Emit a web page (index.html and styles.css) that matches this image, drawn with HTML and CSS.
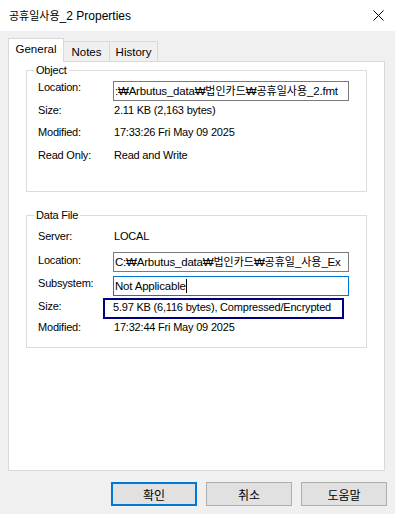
FILE: index.html
```html
<!DOCTYPE html>
<html lang="ko">
<head>
<meta charset="utf-8">
<title>공휴일사용_2 Properties</title>
<link rel="stylesheet" href="styles.css">
</head>
<body>
<div class="window">
  <div class="titlebar">
    <span class="title"><span class="ko">공휴일사용</span>_2 Properties</span>
    <svg class="close" width="11" height="11" viewBox="0 0 11 11"><path d="M0.5 0.5 L10.5 10.5 M10.5 0.5 L0.5 10.5" stroke="#000" stroke-width="1" fill="none"/></svg>
  </div>
  <div class="content">
    <div class="tabs">
      <div class="tab tab-general active">General</div>
      <div class="tab tab-notes">Notes</div>
      <div class="tab tab-history">History</div>
    </div>
    <div class="panel">
      <div class="group group-object">
        <div class="group-title">Object</div>
        <div class="rows rows-object">
          <div class="label lbl-first">Location:</div>
          <div class="textbox tb-obj">:₩Arbutus_data₩<span class="ko">법인카드</span>₩<span class="ko">공휴일사용</span>_2.fmt</div>
          <div class="label">Size:</div>
          <div class="value">2.11 KB (2,163 bytes)</div>
          <div class="label">Modified:</div>
          <div class="value">17:33:26 Fri May 09 2025</div>
          <div class="label">Read Only:</div>
          <div class="value">Read and Write</div>
        </div>
      </div>
      <div class="group group-data">
        <div class="group-title">Data File</div>
        <div class="rows rows-data">
          <div class="label">Server:</div>
          <div class="value">LOCAL</div>
          <div class="label">Location:</div>
          <div class="textbox tb-data">C:₩Arbutus_data₩<span class="ko">법인카드</span>₩<span class="ko">공휴일</span>_<span class="ko">사용</span>_Ex</div>
          <div class="label">Subsystem:</div>
          <div class="textbox tb-sub focused">Not Applicable<span class="caret"></span></div>
          <div class="label">Size:</div>
          <div class="value"><span class="highlight">5.97 KB (6,116 bytes), Compressed/Encrypted</span></div>
          <div class="label">Modified:</div>
          <div class="value">17:32:44 Fri May 09 2025</div>
        </div>
      </div>
    </div>
    <div class="buttons">
      <button class="btn default"><span class="ko">확인</span></button>
      <button class="btn"><span class="ko">취소</span></button>
      <button class="btn"><span class="ko">도움말</span></button>
    </div>
  </div>
</div>
</body>
</html>
```

FILE: styles.css
```css
* { box-sizing: border-box; }
html, body { margin: 0; padding: 0; }
body {
  width: 395px;
  height: 514px;
  background: #f0f0f0;
  font-family: "Liberation Sans", "Noto Sans CJK KR", sans-serif;
  font-size: 11px;
  letter-spacing: -0.2px;
  line-height: 15px;
  color: #000;
  overflow: hidden;
}
.ko {
  font-family: "Noto Sans CJK KR", sans-serif;
  font-size: 11px;
  letter-spacing: 0;
}
.window { width: 395px; height: 514px; }
.titlebar {
  height: 31px;
  background: #fff;
  display: flex;
  align-items: center;
  justify-content: space-between;
  padding: 0 11px 0 9px;
}
.title { font-size: 12px; letter-spacing: 0; }
.close { display: block; }

.content { padding: 7px 8px 0 8px; }

.tabs {
  display: flex;
  align-items: flex-end;
  height: 23px;
}
.tab {
  height: 20px;
  border: 1px solid #d9d9d9;
  border-bottom: none;
  background: #f0f0f0;
  text-align: center;
  line-height: 20px;
  font-size: 11.5px;
  letter-spacing: 0;
  position: relative;
}
.tab-general { width: 56px; }
.tab-notes { width: 47px; margin-left: -1px; }
.tab-history { width: 49px; margin-left: -1px; }
.tab.active {
  height: 24px;
  margin-bottom: -1px;
  background: #fff;
  z-index: 1;
  line-height: 21px;
}

.panel {
  width: 377px;
  height: 410px;
  background: #fff;
  border: 1px solid #d9d9d9;
  padding: 8px 0 0 17px;
}

.group {
  width: 341px;
  border: 1px solid #dcdcdc;
  display: flex;
  flex-direction: column;
}
.group-object { height: 122px; }
.group-data { height: 133px; margin-top: 23px; }
.group-title {
  align-self: flex-start;
  margin: -8px 0 0 7px;
  padding: 0 2px;
  background: #fff;
}

.rows {
  display: grid;
  grid-template-columns: 75px 236px;
  padding-left: 11px;
}
.rows-object {
  margin-top: 2px;
  grid-template-rows: 23px 22px 23px 15px;
}
.rows-data {
  margin-top: 6px;
  grid-template-rows: 24px 23px 23px 21px 15px;
}
.label { white-space: nowrap; }
.value { padding-left: 1px; white-space: nowrap; }

.textbox {
  height: 20px;
  border: 1px solid #7a7a7a;
  padding: 1px 0 0 1px;
  white-space: nowrap;
  overflow: hidden;
  margin-top: 1px;
  font-size: 11.5px;
}
.tb-data { margin-top: -1px; }
.tb-sub { margin-top: 0; padding-top: 2px; }
.textbox.focused { border-color: #0078d7; }
.caret {
  display: inline-block;
  width: 1px;
  height: 14px;
  background: #000;
  vertical-align: -3px;
}

.highlight {
  display: block;
  width: 241px;
  height: 21px;
  margin: -1px 0 0 -11px;
  border: 2px solid #00007f;
  padding-left: 8px;
  line-height: 14px;
  white-space: nowrap;
}

.buttons {
  display: flex;
  justify-content: flex-end;
  gap: 9px;
  margin-top: 11px;
}
.btn {
  width: 86px;
  height: 24px;
  background: #e1e1e1;
  border: 1px solid #adadad;
  font-family: "Liberation Sans", "Noto Sans CJK KR", sans-serif;
  font-size: 12px;
  color: #000;
  padding: 0;
  margin: 0;
}
.btn .ko { font-size: 12px; }
.btn.default { border: 2px solid #0078d7; }
```
